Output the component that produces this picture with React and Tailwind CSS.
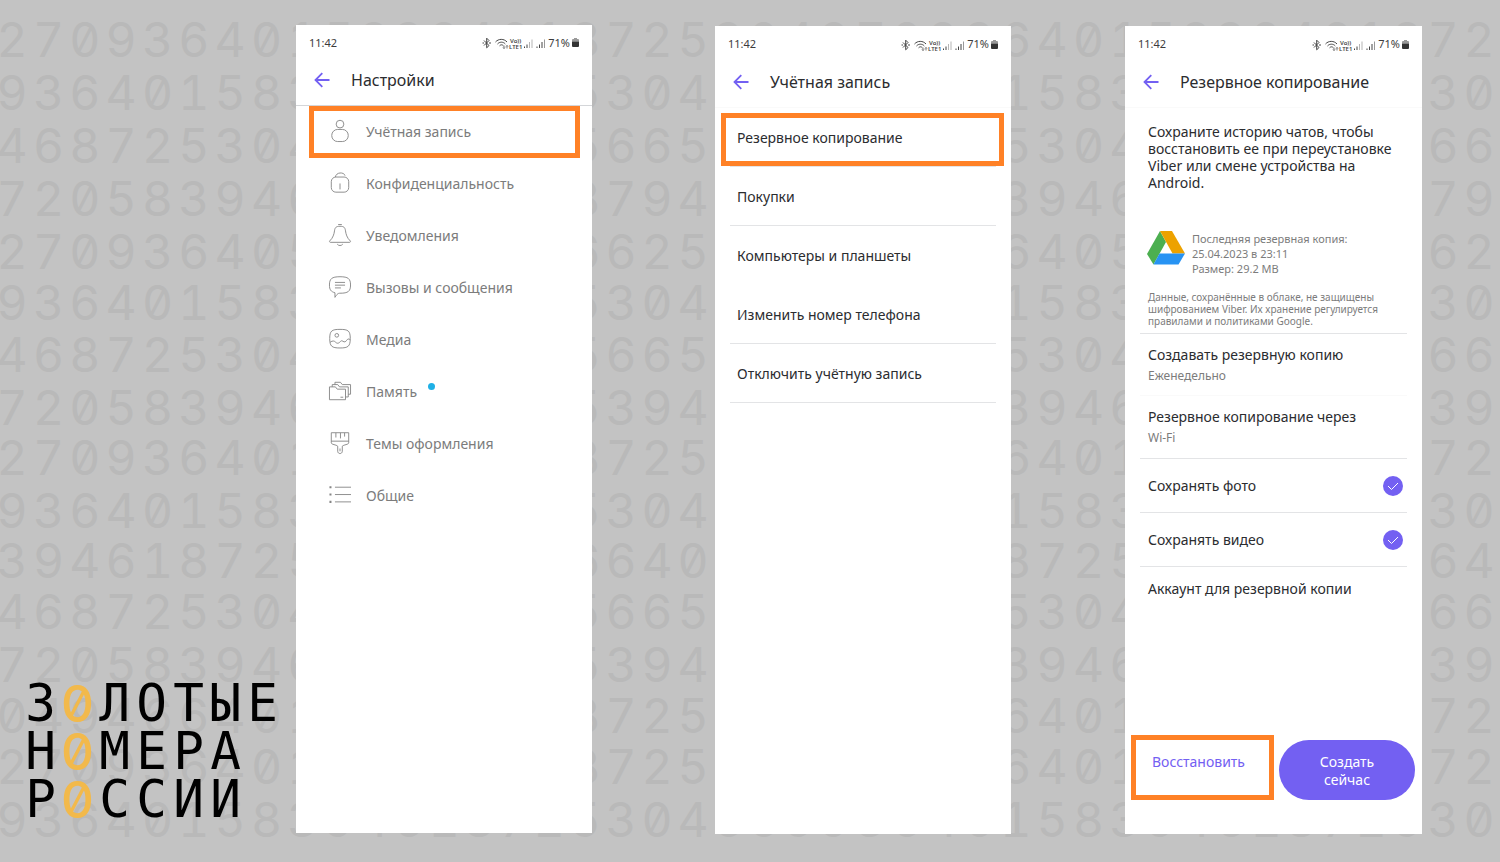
const digitRows = [
  { h: 'h-[53px]', a: '270936401', b: '5839461', c: '8725', d: '304' },
  { h: 'h-[53px]', a: '936401583', b: '9461872', c: '5304', d: '665' },
  { h: 'h-[53px]', a: '468725304', b: '9466401', c: '5665', d: '394' },
  { h: 'h-[53px]', a: '720583946', b: '1872530', c: '8794', d: '625' },
  { h: 'h-[51px]', a: '270936405', b: '8394664', c: '6625', d: '304' },
  { h: 'h-[52px]', a: '936401583', b: '9461872', c: '5304', d: '665' },
  { h: 'h-[53px]', a: '468725304', b: '9466401', c: '5665', d: '394' },
  { h: 'h-[50px]', a: '720583946', b: '1872530', c: '5394', d: '725' },
  { h: 'h-[53px]', a: '270936401', b: '5839461', c: '8725', d: '304' },
  { h: 'h-[50px]', a: '936401583', b: '9461872', c: '5304', d: '665' },
  { h: 'h-[51px]', a: '394618725', b: '3049466', c: '6640', d: '158' },
  { h: 'h-[53px]', a: '468725304', b: '9466401', c: '5665', d: '394' },
  { h: 'h-[51px]', a: '720583946', b: '1872530', c: '5394', d: '725' },
  { h: 'h-[51px]', a: '049466401', b: '5839461', c: '8725', d: '304' },
  { h: 'h-[53px]', a: '270936401', b: '5839461', c: '8725', d: '304' },
  { h: 'h-[53px]', a: '936401583', b: '9461872', c: '5304', d: '665' },
];

function Cells({ text, className }) {
  return (
    <span className={`flex shrink-0 ${className}`}>
      {[...text].map((ch, i) => (
        <span key={i} className="flex-1 basis-0 text-center">{ch}</span>
      ))}
    </span>
  );
}

function DigitPattern() {
  return (
    <div
      aria-hidden="true"
      className="pointer-events-none absolute inset-0 -z-10 overflow-hidden pt-[22px] font-['Inter',sans-serif] text-[48px] leading-[36px] font-normal text-[#b9b9b9] select-none [font-feature-settings:'zero','tnum']"
    >
      {digitRows.map((row, i) => (
        <div key={i} className={`flex ${row.h} -ml-1.5`}>
          {[0, 1].map((tile) => (
            <div key={tile} className="flex shrink-0">
              <Cells text={row.a} className="w-[327px]" />
              <Cells text={row.b} className="w-[246px]" />
              <Cells text={row.c} className="w-[144px]" />
              {tile === 0 && <Cells text={row.d} className="w-[105px]" />}
            </div>
          ))}
        </div>
      ))}
    </div>
  );
}

function LogoLine({ text }) {
  return (
    <span className="flex">
      {[...text].map((ch, i) => (
        <span
          key={i}
          className={`w-[37px] text-center ${ch === '0' ? "font-['Inter',sans-serif] font-medium text-[#f2b94b] [font-feature-settings:'zero']" : ''}`}
        >
          {ch}
        </span>
      ))}
    </span>
  );
}

function Logo() {
  return (
    <div className="flex flex-col self-end pb-2.5 pl-[22px] font-['DejaVu_Sans_Mono',monospace] text-[51px] leading-[48px] text-black">
      <LogoLine text="З0ЛОТЫЕ" />
      <LogoLine text="Н0МЕРА" />
      <LogoLine text="Р0ССИИ" />
    </div>
  );
}

function StatusBar({ className }) {
  return (
    <div className={`flex shrink-0 items-center justify-between pr-3 pl-[13px] text-[11px] text-[#3c3c3c] ${className}`}>
      <span>11:42</span>
      <span className="flex items-center">
        <svg width="66" height="14" viewBox="0 0 66 14" fill="none" stroke="#444" strokeWidth="1" aria-hidden="true">
          <path d="M2 4.500l5 5-2.300 2.300V2.200L7 4.500l-5 5M.5 7h1.500M7 7h2" />
          <path d="M13.500 6c3-3.500 8.500-3.500 11.500 0M15.500 8c2-2.400 5.800-2.400 7.800 0M17.600 9.800c1.200-1.300 2.700-1.300 3.800 0" />
          <path d="M22 9.500v3M21 11.500l1 1 1-1M25 12.500v-3M24 10.500l1-1 1 1" strokeWidth=".7" />
          <g fill="#444" stroke="none" fontFamily="Noto Sans" fontSize="6" fontWeight="600">
            <text x="28" y="6.500">Vo))</text>
            <text x="27" y="12.500">LTE1</text>
          </g>
          <path d="M42.500 12v-1.500M45 12V8.500" />
          <path d="M47.500 12V6M50 12V3.500" stroke="#b5b5b5" />
          <path d="M55 12v-1.500M57.500 12V8.500M60 12V6" />
          <path d="M62.500 12V3.500" stroke="#999" />
        </svg>
        <span>71%</span>
        <svg width="9" height="10" viewBox="0 0 9 10" className="ml-px" aria-hidden="true">
          <path d="M3 0h3v1H3zM2 1h5a1 1 0 0 1 1 1v1.500H1V2a1 1 0 0 1 1-1z" fill="#999" />
          <path d="M1 3.500h7v4.500a1 1 0 0 1-1 1H2a1 1 0 0 1-1-1z" fill="#333" />
        </svg>
      </span>
    </div>
  );
}

function Phone({ title, className, statusClass, lineClass, children }) {
  return (
    <section className={`flex min-w-0 flex-col bg-white ${className}`}>
      <StatusBar className={statusClass} />
      <header className={`flex h-[45px] shrink-0 items-center gap-[21px] border-b pb-1.5 pl-[18px] ${lineClass}`}>
        <button type="button" aria-label="Назад" className="shrink-0">
          <svg width="16" height="16" viewBox="0 0 16 16" fill="none" stroke="#7360f2" strokeWidth="1.800" aria-hidden="true">
            <path d="M15.500 8H1.800M8.300 1.200L1.500 8l6.800 6.800" />
          </svg>
        </button>
        <h2 className="text-[16px] whitespace-nowrap text-[#2b2c2f]">{title}</h2>
      </header>
      {children}
    </section>
  );
}

const settings = [
  { label: 'Учётная запись', active: true, icon: <><circle cx="12" cy="4.500" r="4.200" /><rect x="3" y="10.300" width="18" height="13.200" rx="6.400" /></> },
  { label: 'Конфиденциальность', icon: <><path d="M7 5.500C7.500 0 16.500-.3 17.500 4M7.500 5.500h9a5 5 0 0 1 5 5v6.500a5 5 0 0 1-5 5h-9a5 5 0 0 1-5-5v-6.500a5 5 0 0 1 5-5zM12 12.500v6.500" /></> },
  { label: 'Уведомления', icon: <><path d="M10 .6h4M.8 18.500C4.500 15 5.500 11 6 7.500c.5-4 2-5 6-5s5.500 1 6 5c.5 3.500 1.500 7.500 5.200 11 .5.800.2 1.500-.8 1.500H1.600c-1 0-1.300-.7-.8-1.500zM9 22c1.500 2 4.500 2 6 0" /></> },
  { label: 'Вызовы и сообщения', icon: <><path d="M12 .8c9 0 11.500 2.200 11.500 9s-2.500 9-11.500 9c-2 0-3 .5-5.500 4.500v-5C2 17 .5 15 .5 9.800.5 3 3 .8 12 .8zM6.500 7h11M6.500 10h11M6.500 13h6.500" /></> },
  { label: 'Медиа', icon: <><path d="M12 1.500c9 0 11.200 1.500 11.200 10S21 21.800 12 21.800.8 20 .8 11.500 3 1.500 12 1.500zM1.200 15.500c3-2 4.500-1.500 6 0s3 1.500 4.500 0 2-2.200 3.500-1c1.800 1.300 3 .5 4-1s2-2 3.800-1" /><circle cx="8.500" cy="8" r="2" /></> },
  { label: 'Память', dot: true, icon: <><path d="M.5 21.500V7.500H7L9 10h9v11.500zM3.500 7.500V5h6l2 2.500h9.500V18.500h-3M6.500 5V2.500h6L14.500 5h9v10.500h-2.500M12.500 18.800h3" /></> },
  { label: 'Темы оформления', icon: <><path d="M2.500.8h19v11c0 2-5.500 2-7 3.700v5.500c0 3.300-5 3.300-5 0v-5.500c-1.500-1.700-7-1.700-7-3.700zM2.500 10h19M7.500 1v5M12.500 1v6M17 1v4M12 18v3" /></> },
  { label: 'Общие', icon: <><path d="M6.500 3.500H24M6.500 11.500H24M6.500 19.500H24" /><path d="M.5 3.500h2.200M.5 11.500h2.200M.5 19.500h2.200" strokeWidth="2.200" /></> },
];

function SettingsPhone() {
  return (
    <Phone title="Настройки" className="col-start-2 mb-px" statusClass="h-9" lineClass="border-[#d4d6d9]">
      <ul className="mr-3 ml-[13px]">
        {settings.map((s) => (
          <li key={s.label}>
            <button
              type="button"
              className={`flex h-[52px] w-full items-center gap-[15px] border-5 pb-0.5 pl-[15px] text-left text-[14px] text-[#7c7c7c] ${s.active ? 'border-[#ff8126]' : 'border-transparent'}`}
            >
              <svg width="22" height="22" viewBox="0 0 24 24" fill="none" stroke="#858585" strokeWidth="1" className="shrink-0 overflow-visible" aria-hidden="true">{s.icon}</svg>
              <span className="whitespace-nowrap">{s.label}</span>
              {s.dot && <span className="mb-2.5 -ml-1 size-[7px] rounded-full bg-[#1fb0e6]" />}
            </button>
          </li>
        ))}
      </ul>
    </Phone>
  );
}

const account = [
  { label: 'Резервное копирование', line: true, active: true },
  { label: 'Покупки', line: true },
  { label: 'Компьютеры и планшеты' },
  { label: 'Изменить номер телефона', line: true },
  { label: 'Отключить учётную запись', line: true },
];

function AccountPhone() {
  return (
    <Phone title="Учётная запись" className="col-start-4 mt-px" statusClass="h-[37px]" lineClass="border-[#fafafa]">
      <ul className="mx-[15px]">
        {account.map((a) => (
          <li key={a.label} className={`relative h-[59px] border-b ${a.line ? 'border-[#e3e4e6]' : 'border-transparent'}`}>
            <button type="button" className="h-full w-full pl-[7px] text-left text-[14px] whitespace-nowrap text-[#2b2c2f]">{a.label}</button>
            {a.active && <span className="pointer-events-none absolute top-[5px] -right-2 bottom-0 -left-[9px] border-5 border-[#ff8126]" />}
          </li>
        ))}
      </ul>
    </Phone>
  );
}

function CheckRow({ label }) {
  return (
    <label className="mx-[15px] flex h-[54px] items-center justify-between border-b border-[#e3e4e6] pr-1 pl-2 text-[14px] text-[#2b2c2f]">
      {label}
      <span className="grid">
        <input type="checkbox" defaultChecked className="col-start-1 row-start-1 size-5 appearance-none rounded-full bg-[#d0d0d0] checked:bg-[#7360f2]" />
        <svg width="20" height="20" viewBox="0 0 20 20" fill="none" stroke="#fff" strokeWidth="1" className="pointer-events-none col-start-1 row-start-1" aria-hidden="true">
          <path d="M5 10l3.500 3.500L15 7" />
        </svg>
      </span>
    </label>
  );
}

function BackupPhone() {
  return (
    <Phone title="Резервное копирование" className="col-start-6 mt-px" statusClass="h-[37px]" lineClass="border-[#fafafa]">
      <p className="px-[23px] pt-[15px] text-[14px] leading-[17px] text-[#2b2c2f]">
        Сохраните историю чатов, чтобы<br />восстановить ее при переустановке<br />Viber или смене устройства на<br />Android.
      </p>
      <div className="mt-10 flex gap-[7px] pl-[22px] text-[11px] leading-[15px] text-[#7c7c7c]">
        <svg width="38" height="34" viewBox="0 0 38 34" className="shrink-0" aria-hidden="true">
          <path d="M13 0L0 23l6.500 10.500L19 11z" fill="#4caf50" />
          <path d="M13 0h12l13 22.500H25.500z" fill="#eda200" />
          <path d="M12.500 22.500H38l-6.500 11h-25z" fill="#2793f3" />
        </svg>
        <p className="whitespace-nowrap">Последняя резервная копия:<br />25.04.2023 в 23:11<br />Размер: 29.2 MB</p>
      </div>
      <p className="mx-[15px] mt-[15px] border-b border-[#e3e4e6] pb-1.5 pl-2 text-[10px] leading-[12px] whitespace-nowrap text-[#7c7c7c]">
        Данные, сохранённые в облаке, не защищены<br />шифрованием Viber. Их хранение регулируется<br />правилами и политиками Google.
      </p>
      <button type="button" className="mx-[15px] flex h-[62px] flex-col justify-center border-b border-[#fafafa] pl-2 text-left">
        <span className="text-[14px] leading-[22px] text-[#2b2c2f]">Создавать резервную копию</span>
        <span className="text-[12px] leading-[20px] text-[#7c7c7c]">Еженедельно</span>
      </button>
      <button type="button" className="mx-[15px] flex h-[63px] flex-col justify-center border-b border-[#e3e4e6] pl-2 text-left">
        <span className="text-[14px] leading-[22px] text-[#2b2c2f]">Резервное копирование через</span>
        <span className="text-[12px] leading-[20px] text-[#7c7c7c]">Wi-Fi</span>
      </button>
      <CheckRow label="Сохранять фото" />
      <CheckRow label="Сохранять видео" />
      <button type="button" className="mx-[15px] h-[42px] pl-2 text-left text-[14px] text-[#2b2c2f]">Аккаунт для резервной копии</button>
      <div className="mt-auto flex items-end gap-[5px] pr-[7px] pb-[34px] pl-1.5 text-[14px] leading-[18px]">
        <button type="button" className="h-[65px] flex-1 border-5 border-[#ff8126] pr-2 pb-3 text-[#7360f2]">Восстановить</button>
        <button type="button" className="h-[60px] w-[136px] rounded-full bg-[#7360f2] pt-0.5 text-white">Создать<br />сейчас</button>
      </div>
    </Phone>
  );
}

export default function App() {
  return (
    <main className="relative isolate grid min-h-screen grid-cols-[296fr_296fr_123fr_296fr_114fr_297fr_78fr] overflow-hidden bg-[#c3c3c3] pt-[25px] pb-7 font-['Noto_Sans',sans-serif]">
      <DigitPattern />
      <Logo />
      <SettingsPhone />
      <AccountPhone />
      <BackupPhone />
    </main>
  );
}
